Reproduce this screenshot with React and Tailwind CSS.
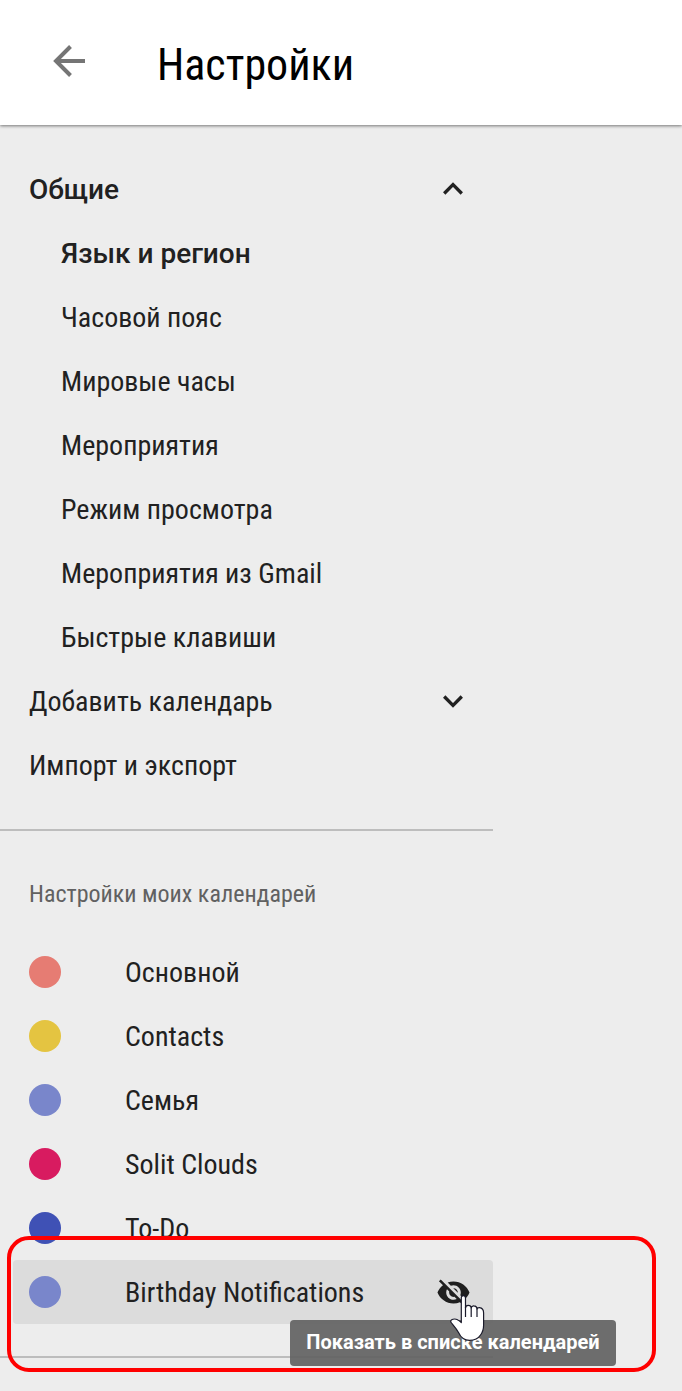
import React from "react";

const general = [
  "Часовой пояс",
  "Мировые часы",
  "Мероприятия",
  "Режим просмотра",
  "Мероприятия из Gmail",
  "Быстрые клавиши",
];

const calendars = [
  { name: "Основной", dot: "bg-[#e67c73]" },
  { name: "Contacts", dot: "bg-[#e4c441]" },
  { name: "Семья", dot: "bg-[#7986cb]" },
  { name: "Solit Clouds", dot: "bg-[#d81b60]" },
  { name: "To-Do", dot: "bg-[#3f51b5]" },
  { name: "Birthday Notifications", dot: "bg-[#7986cb]", active: true },
];

function Chevron({ up }) {
  return (
    <svg className="size-8" viewBox="0 0 32 32" fill="none" stroke="#212121" strokeWidth="3.300">
      <path d={up ? "M7.200 20.500 L16 11.700 L24.800 20.500" : "M7.200 11.500 L16 20.300 L24.800 11.500"} />
    </svg>
  );
}

function HiddenEye() {
  return (
    <svg className="mr-[0.5px] size-[35px]" viewBox="0 0 24 24" fill="#1f1f1f">
      <path d="M12 7c2.760 0 5 2.240 5 5 0 .65-.13 1.260-.36 1.830l2.920 2.920c1.510-1.260 2.700-2.890 3.430-4.750-1.730-4.390-6-7.500-11-7.500-1.400 0-2.740.25-3.980.7l2.160 2.160C10.740 7.130 11.350 7 12 7zM2 4.270l2.280 2.280.46.46C3.080 8.300 1.780 10.020 1 12c1.730 4.390 6 7.500 11 7.500 1.550 0 3.030-.3 4.380-.84l.42.42L19.730 22 21 20.730 3.270 3 2 4.270zM7.530 9.800l1.550 1.550c-.05.21-.08.43-.08.65 0 1.660 1.340 3 3 3 .22 0 .44-.03.65-.08l1.550 1.550c-.67.33-1.410.53-2.200.53-2.760 0-5-2.240-5-5 0-.79.2-1.530.53-2.200zm4.310-.78l3.150 3.150.02-.16c0-1.660-1.340-3-3-3l-.17.01z" />
    </svg>
  );
}

function HandCursor() {
  return (
    <svg className="absolute left-[449px] top-[1294px] h-[48px] w-[37px]" viewBox="0 0 37 48">
      <path
        d="M12.300 28.500 V4 Q12.300 1.700 14.400 1.700 Q16.500 1.700 16.500 4 V14 Q16.800 11.300 19.300 11.300 Q22 11.300 22.200 14 Q22.600 11.700 25 11.900 Q27.800 12 28 15 Q28.500 13.400 30.500 13.600 Q34.600 14 34.600 19 V31 C34.600 36 33.500 38.500 31.500 41 C29 45 25 46.300 20.500 46.300 C14 46.300 11.500 43 9.500 38.500 C7 34 4 31 1.700 28 C1.200 25 6 24.500 8 25.500 Q10.500 26.800 12.300 28.500Z"
        fill="#fff"
        stroke="#1b1b2b"
        strokeWidth="1.200"
        strokeLinejoin="round"
      />
      <path d="M16.500 13 V23 M22.200 14 V23 M28 15 V23" stroke="#1b1b2b" strokeWidth="1.200" fill="none" />
    </svg>
  );
}

export default function App() {
  return (
    <div className="relative h-[1391px] w-[682px] overflow-hidden bg-[#ededed] font-['Roboto_Condensed',Roboto,sans-serif] text-[28px] text-[#212121] [font-stretch:75%]">
      <header className="flex h-[125px] items-center bg-white pl-[53px] shadow-[0_1px_3px_0_rgba(0,0,0,0.5)]">
        <svg className="mb-1 h-[34px] w-[33px]" viewBox="0 0 33 34" fill="none" stroke="#757575" strokeWidth="4">
          <path d="M32 17 H3 M17.500 2.500 L3 17 L17.500 31.500" />
        </svg>
        <h1 className="ml-[71px] mt-[4px] text-[44px] text-black">Настройки</h1>
      </header>

      <nav className="flex flex-col pt-8">
        <div className="flex h-16 w-[469px] items-center justify-between pl-[29px]">
          <span className="pt-[2px] font-medium [font-stretch:100%] font-['Roboto',sans-serif]">Общие</span>
          <Chevron up />
        </div>
        <div className="flex h-16 items-center pl-[61px]">
          <span className="pt-[2px] font-medium [font-stretch:100%] font-['Roboto',sans-serif]">Язык и регион</span>
        </div>
        {general.map((label) => (
          <div key={label} className="flex h-16 items-center pl-[61px]">
            <span className="pt-[2px]">{label}</span>
          </div>
        ))}
        <div className="flex h-16 w-[469px] items-center justify-between pl-[29px]">
          <span className="pt-[2px]">Добавить календарь</span>
          <Chevron />
        </div>
        <div className="flex h-16 items-center pl-[29px]">
          <span className="pt-[2px]">Импорт и экспорт</span>
        </div>
      </nav>

      <div className="mt-8 h-[2px] w-[493px] bg-[#bdbdbd]" />

      <section className="pt-[30px]">
        <h2 className="flex h-16 items-center pl-[29px] text-[24px] text-[#616161]">
          <span className="pt-[2px]">Настройки моих календарей</span>
        </h2>
        <ul className="mt-[15px]">
          {calendars.map(({ name, dot, active }) => (
            <li
              key={name}
              className={`ml-[13px] flex h-16 w-[480px] items-center rounded pl-4 pr-[22px] ${active ? "bg-[#dcdcdc]" : ""}`}
            >
              <span className={`size-8 rounded-full ${dot}`} />
              <span className="ml-16 flex-1 whitespace-nowrap pt-[2px]">{name}</span>
              {active && <HiddenEye />}
            </li>
          ))}
        </ul>
      </section>

      <div className="mt-8 h-[2px] w-[493px] bg-[#bdbdbd]" />

      <div className="absolute left-[290px] top-[1320px] flex h-[46px] w-[326px] items-center justify-center rounded bg-[rgba(98,98,98,0.92)] pb-[2px] font-['Roboto',sans-serif] text-[20px] font-bold text-white [font-stretch:100%]">
        Показать в списке календарей
      </div>
      <div className="absolute left-[7px] top-[1236px] h-[136px] w-[649px] rounded-[22px] border-4 border-[#ff0000]" />
      <HandCursor />
    </div>
  );
}
